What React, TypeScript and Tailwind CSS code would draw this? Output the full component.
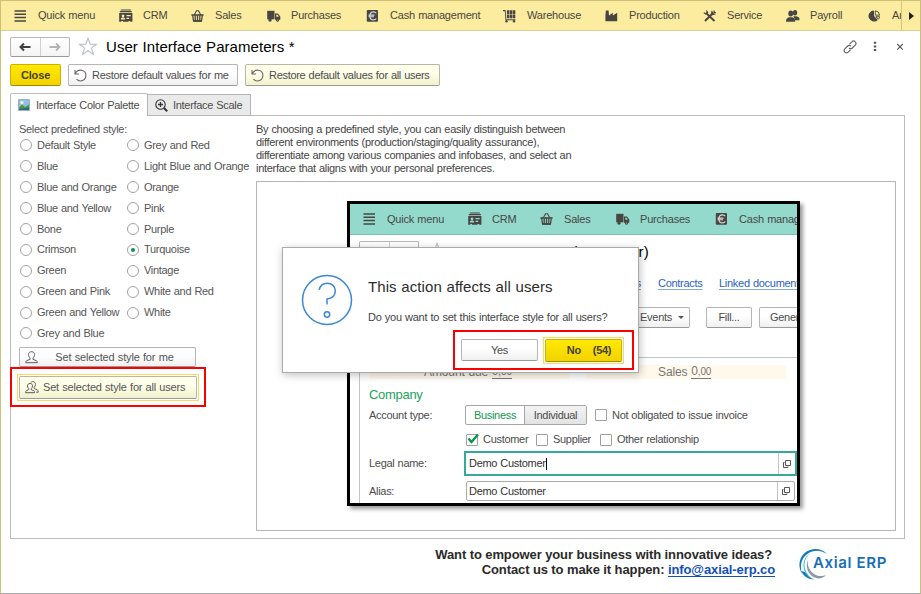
import React from "react";

type IconProps = { className?: string };

const MenuIcon = () => (
  <svg width="14" height="14" viewBox="0 0 14 14" fill="none" stroke="currentColor" strokeWidth="1.5">
    <path d="M.5 2h11.500M.5 5.300h11.500M.5 8.600h11.500M.5 11.900h11.500" />
  </svg>
);
const CrmIcon = () => (
  <svg width="14" height="14" viewBox="0 0 14 14" fill="currentColor">
    <path d="M1.800.4h10v1.200h-10zM.8 2.100h12v1.200H.8z" />
    <path fillRule="evenodd" d="M.2 3.900h13.200v8.900H11.300v-.8H9.600v.8H4v-.8H2.300v.8H.2zM4 5.400a1.400 1.400 0 1 0 .01 0zM1.800 10.600h4.400c0-1.400-.8-2-2.200-2s-2.200.6-2.200 2zM7.500 6.100v1.200h4.200v-1.200zM7.500 8.700v1.200h2.700v-1.200z" />
  </svg>
);
const BasketIcon = () => (
  <svg width="14" height="14" viewBox="0 0 14 14" fill="none" stroke="currentColor">
    <path d="M3.200 6 5.500 1.800h2L9.800 6" strokeWidth="1.100" />
    <path d="M.4 6h12.200" strokeWidth="1.600" />
    <path d="M1.700 6.500 2.600 12h7.800l.9-5.500M4.200 6.500v5M6.500 6.500v5M8.800 6.500v5" strokeWidth="1.300" />
    <path d="M2.300 12h8.400" strokeWidth="1.500" />
  </svg>
);
const TruckIcon = () => (
  <svg width="14" height="14" viewBox="0 0 14 14" fill="currentColor">
    <path d="M.2 1.800h7.300v8.500H.2z" />
    <path fillRule="evenodd" d="M8 4.500h2.900L13.300 7.500v3.300H8zM9.300 5.800v1.900h2.500L10.600 5.800z" />
    <circle cx="3" cy="11" r="1.700" />
    <circle cx="10.500" cy="11" r="1.700" />
    <circle cx="10.500" cy="11" r=".6" fill="#fff" opacity=".7" />
  </svg>
);
const EuroIcon = () => (
  <svg width="14" height="14" viewBox="0 0 14 14" fill="none">
    <rect x=".8" y="1" width="11.200" height="11.800" rx="1" fill="currentColor" />
    <path d="M10.300 4.300C9.600 3.300 8.700 2.900 7.500 2.900c-2.300 0-3.600 1.700-3.600 4s1.300 4 3.600 4c1.200 0 2.100-.4 2.800-1.400M2.500 6.100h6M2.500 7.800h5.500" stroke="#fff" strokeOpacity=".8" strokeWidth="1.100" />
  </svg>
);
const CartIcon = () => (
  <svg width="14" height="14" viewBox="0 0 14 14" fill="currentColor">
    <path d="M0 1h2.600l.7 9.200h9.200v1.100H2.500L1.800 2.200H0z" />
    <path d="M3.900 1.300h2.500v3.600H3.900zM6.900 1.300h2.300v3.600H6.900zM9.700 1.300h2.600v3.600H9.700zM3.900 5.400h2.500v3.900H3.900zM6.900 5.400h2.300v3.900H6.900zM9.700 5.400h2.600v3.900H9.700z" />
    <circle cx="3.500" cy="12.200" r="1.200" />
    <circle cx="11" cy="12.200" r="1.200" />
  </svg>
);
const FactoryIcon = () => (
  <svg width="14" height="14" viewBox="0 0 14 14" fill="currentColor">
    <path d="M.4 12.300V6.500L.9 1.500h2.700l.4 5L7.800 3.800v2.700L12.200 3.800v8.500z" />
  </svg>
);
const ToolsIcon = () => (
  <svg width="14" height="14" viewBox="0 0 14 14" fill="none" stroke="currentColor">
    <path d="M2.800 3.800 11.500 12" strokeWidth="1.900" />
    <path d="M10.500 3.500 2 12" strokeWidth="1.900" />
    <path d="M.8 3.600 2.600 5l2-1.600L3.400 1.500M9 1.800 8.600 4.500l1 1 2.800-.5M12.800 3.600 11.300 3.400 11 1.500" strokeWidth="1.200" />
  </svg>
);
const PeopleIcon = () => (
  <svg width="14" height="14" viewBox="0 0 14 14" fill="currentColor">
    <ellipse cx="9" cy="3.700" rx="2.200" ry="2.700" />
    <path d="M7.300 7.300h3.200l2.900 1.500V11.300H9.400z" />
    <ellipse cx="4.700" cy="4.500" rx="2.400" ry="3" />
    <path d="M0 12.800c0-3.200 1.200-3.900 3.200-4.500h2.800c2.200.6 3.200 1.300 3.200 4.500z" />
  </svg>
);
const PieIcon = () => (
  <svg width="14" height="14" viewBox="0 0 14 14">
    <path d="M6 1.500v5.500l3.900 3.900A5.500 5.500 0 1 1 6 1.500z" fill="currentColor" />
    <path d="M7.300 1.800a4.600 4.600 0 0 1 4.300 4.400H7.300zM7.800 7.700h3.800c-.1 1-.5 1.700-1.200 2.400z" fill="none" stroke="currentColor" strokeWidth=".9" />
  </svg>
);

const menuItems = [
  { label: "Quick menu", Icon: MenuIcon, width: "w-[105px]" },
  { label: "CRM", Icon: CrmIcon, width: "w-[72px]" },
  { label: "Sales", Icon: BasketIcon, width: "w-[76px]" },
  { label: "Purchases", Icon: TruckIcon, width: "w-[99px]" },
  { label: "Cash management", Icon: EuroIcon, width: "w-[137px]" },
  { label: "Warehouse", Icon: CartIcon, width: "w-[102px]" },
  { label: "Production", Icon: FactoryIcon, width: "w-[98px]" },
  { label: "Service", Icon: ToolsIcon, width: "w-[83px]" },
  { label: "Payroll", Icon: PeopleIcon, width: "w-[82px]" },
  { label: "Analytics", Icon: PieIcon, width: "w-[90px]" },
];

function MenuItems({ count }: { count: number }) {
  return (
    <div className="flex min-w-0 flex-1 items-center overflow-hidden pl-[13px] tracking-[-0.2px] text-[#484642]">
      {menuItems.slice(0, count).map(({ label, Icon, width }) => (
        <div key={label} className={`flex shrink-0 items-center whitespace-nowrap ${width}`}>
          <span className="w-6 shrink-0">
            <Icon />
          </span>
          {label}
        </div>
      ))}
    </div>
  );
}

function NavButtons() {
  return (
    <div className="flex h-5 w-[60px] shrink-0 rounded-[2px] border border-[#b5b5b5] border-b-[#999] bg-gradient-to-b from-white to-[#f4f4f4]">
      <div className="flex flex-1 items-center justify-center border-r border-[#d0d0d0]">
        <svg width="12" height="10" viewBox="0 0 12 10" fill="none" stroke="#404040" strokeWidth="2">
          <path d="M11.500 5H2M5 1.500 1.500 5 5 8.500" />
        </svg>
      </div>
      <div className="flex flex-1 items-center justify-center">
        <svg width="12" height="10" viewBox="0 0 12 10" fill="none" stroke="#b4b4b4" strokeWidth="1.800">
          <path d="M.5 5H10M7 1.500 10.500 5 7 8.500" />
        </svg>
      </div>
    </div>
  );
}

const Star = ({ className }: IconProps) => (
  <svg className={className} width="20" height="19" viewBox="0 0 20 19" fill="none" stroke="#b9c0c6" strokeWidth="1.100">
    <path d="m10 1.200 2.200 6h6.300l-5 3.900 1.900 6.300L10 13.700l-5.400 3.700 1.900-6.300-5-3.900h6.300z" />
  </svg>
);

const Undo = () => (
  <svg width="13" height="13" viewBox="0 0 13 13" fill="none" stroke="#666" strokeWidth="1.100">
    <path d="M1 1v4h4M1.200 4.800C2.500 2 5 .8 7.600 1.300c2.600.5 4.300 2.800 4.300 5.200 0 3-2.300 5.500-5.300 5.500-1.700 0-3-.6-4.100-1.800" />
  </svg>
);

const Person = () => (
  <svg width="14" height="13" viewBox="0 0 14 13" fill="none" stroke="#5c5c5c" strokeWidth="1">
    <path d="M6.500.7c2 0 3 1.200 3 2.900 0 1.500-.6 2.600-1.500 3.300v1.500l3.500 1.300c.6.300.8 1 .8 2H.8c0-1 .2-1.700.8-2L5 8.400V6.900C4.100 6.200 3.500 5.100 3.500 3.600c0-1.700 1-2.900 3-2.900z" />
  </svg>
);
const Persons = () => (
  <svg width="14" height="13" viewBox="0 0 14 13" fill="none" stroke="#5c5c5c" strokeWidth="1">
    <path d="M5 2.500c1.700 0 2.500 1 2.500 2.400 0 1.200-.5 2-1.200 2.600v1.200l2.500 1c.6.300.8.900.8 2H.6c0-1.100.2-1.700.8-2l2.300-1V7.500C3 6.900 2.500 6.100 2.500 4.900c0-1.400.8-2.400 2.500-2.400zM5.700 1.700C6.200 1 6.900.6 7.800.6c1.800 0 2.600 1.200 2.600 2.800 0 1.300-.5 2.200-1.200 2.900v1.300l3 1.300c.8.400 1 1 1 2.300h-2" />
  </svg>
);

function Radio({ label, on }: { label: string; on?: boolean }) {
  return (
    <div className="flex h-[20.9px] items-center whitespace-nowrap">
      <span className="mr-[5px] flex size-3 shrink-0 items-center justify-center rounded-full border border-[#a3a3a3] bg-white">
        {on && <span className="size-1 rounded-full bg-[#0a9447]" />}
      </span>
      {label}
    </div>
  );
}

function Check({ label, on }: { label: string; on?: boolean }) {
  return (
    <div className="flex items-center whitespace-nowrap">
      <span className="relative mr-[5px] size-3 shrink-0 rounded-[1px] border border-[#a0a0a0] bg-white">
        {on && (
          <svg className="absolute -top-[2px] left-0" width="12" height="12" viewBox="0 0 12 12" fill="none" stroke="#009646" strokeWidth="2.200">
            <path d="m1.500 5.500 3 3.500L11 1.500" />
          </svg>
        )}
      </span>
      {label}
    </div>
  );
}

const OpenIcon = () => (
  <svg width="8" height="8" viewBox="0 0 8 8" fill="none" stroke="#555" strokeWidth="1">
    <path d="M2.500.5h5v5h-5zM1.500 2.500h-1v5h4.500V6.500" />
  </svg>
);

const whiteButton =
  "flex items-center rounded-[2px] border border-[#b5b5b5] border-b-[#999] bg-gradient-to-b from-white from-40% to-[#f0f0f0]";
const creamButton =
  "flex items-center rounded-[2px] border border-[#b7b7a5] border-b-[#9c9c8c] bg-gradient-to-b from-[#ffffea] from-40% to-[#f1f1cd]";
const goldButton =
  "flex items-center justify-center rounded-[2px] border border-[#cdb000] border-b-[#a08a00] bg-gradient-to-b from-[#ffe900] to-[#f2d300] font-bold text-[#45412c]";

const leftStyles = ["Default Style", "Blue", "Blue and Orange", "Blue and Yellow", "Bone", "Crimson", "Green", "Green and Pink", "Green and Yellow", "Grey and Blue"];
const rightStyles = ["Grey and Red", "Light Blue and Orange", "Orange", "Pink", "Purple", "Turquoise", "Vintage", "White and Red", "White"];

function StylePicker() {
  return (
    <div className="w-[245px] shrink-0 pl-2 pt-[7px] text-[#555]">
      <div className="h-[12px] leading-[13px]">Select predefined style:</div>
      <div className="flex h-[210px] pl-px">
        <div className="w-[107px]">
          {leftStyles.map((s) => (
            <Radio key={s} label={s} />
          ))}
        </div>
        <div>
          {rightStyles.map((s) => (
            <Radio key={s} label={s} on={s === "Turquoise"} />
          ))}
        </div>
      </div>
      <div className={`mt-[2px] h-[20px] w-[177px] pl-[5px] ${whiteButton}`}>
        <Person />
        <span className="flex-1 pr-[5px] text-center tracking-[-0.15px]">Set selected style for me</span>
      </div>
      <div className="-ml-[9px] flex h-10 w-[196px] items-center border-2 border-[#fa0000] pl-[5px]">
        <div className="h-[27px] w-[182px] border border-[#f8d860] p-[1px]">
          <div className={`h-[23px] w-full pl-[5px] ${creamButton}`}>
            <Persons />
            <span className="pl-[4px] tracking-[-0.18px] whitespace-nowrap">Set selected style for all users</span>
          </div>
        </div>
      </div>
    </div>
  );
}

function Field({ value, focused }: { value: string; focused?: boolean }) {
  return (
    <div
      className={
        focused
          ? "flex h-[25px] w-[333px] items-stretch border-2 border-[#36aa98] bg-white text-[#333]"
          : "ml-[2px] flex h-[20px] w-[329px] items-stretch rounded-[2px] border border-[#a9a9a9] bg-white text-[#333]"
      }
    >
      <div className={focused ? "flex flex-1 items-center pl-[3px]" : "flex flex-1 items-center pl-[2px]"}>
        {value}
        {focused && <span className="h-3 w-px bg-black" />}
      </div>
      <div className="flex w-[17px] items-center justify-center border-l border-[#c4c4c4]">
        <OpenIcon />
      </div>
    </div>
  );
}

function Preview() {
  return (
    <div className="ml-[90px] mt-[19px] flex h-[305px] w-[453px] flex-col overflow-hidden border-[3px] border-black bg-white text-[#4c4c4c] shadow-[3px_3px_4px_rgba(0,0,0,0.4)]">
      <div className="flex h-[31px] shrink-0 border-b border-[#7fbfb3] bg-[#93dacd]">
        <MenuItems count={5} />
      </div>
      <div className="flex h-[32px] shrink-0 items-center pl-[9px]">
        <NavButtons />
        <Star className="ml-2 shrink-0" />
        <span className="ml-[9px] whitespace-nowrap text-[15px] tracking-[0.15px] text-black">Demo Customer (Customer)</span>
      </div>
      <div className="flex h-[32px] shrink-0 items-center whitespace-nowrap tracking-[-0.28px] text-[#2a62c0] underline decoration-[#86a9dc] underline-offset-2">
        <span className="w-[291px] shrink-0 text-right">Documents</span>
        <span className="ml-[17px] w-[61px] shrink-0">Contracts</span>
        <span>Linked documents</span>
      </div>
      <div className="flex h-[37px] shrink-0 items-center pl-[284px]">
        <div className={`h-[21px] w-[56px] shrink-0 justify-center ${whiteButton}`}>
          Events
          <span className="ml-[6px] border-x-[3px] border-t-[3px] border-x-transparent border-t-[#555]" />
        </div>
        <div className={`ml-4 h-[21px] w-[46px] shrink-0 justify-center ${whiteButton}`}>Fill...</div>
        <div className={`ml-[7px] h-[21px] w-[70px] shrink-0 pl-[10px] ${whiteButton}`}>Generate</div>
      </div>
      <div className="ml-[9px] mt-[21px] flex-1 border-l border-t border-[#c4c4c4] pl-[9px] pt-[7px]">
        <div className="flex h-[14px] gap-[17px] text-[12px] tracking-[-0.1px] text-[#777]">
          <div className="flex w-[200px] items-center bg-[#fff9ec] pl-[55px]">
            Amount due&nbsp;<span className="border-b border-[#777] leading-[12px]">0<span className="text-[10px]">,00</span></span>
          </div>
          <div className="flex w-[200px] items-center bg-[#fff9ec] pl-[72px]">
            Sales&nbsp;<span className="border-b border-[#777] leading-[12px]">0<span className="text-[10px]">,00</span></span>
          </div>
        </div>
        <div className="flex h-[25px] items-center pt-[5px] text-[13px] tracking-[-0.3px] text-[#22a35a]">Company</div>
        <div className="flex h-[22px] items-center">
          <div className="w-[96px]">Account type:</div>
          <div className="flex h-[20px] w-[122px] rounded-[2px] border border-[#a5a5a5] text-center leading-[18px]">
            <div className="w-[58px] text-[#12984c]">Business</div>
            <div className="flex-1 border-l border-[#a5a5a5] bg-gradient-to-b from-[#f3f3f3] to-[#e3e3e3]">Individual</div>
          </div>
          <div className="ml-[8px]">
            <Check label="Not obligated to issue invoice" />
          </div>
        </div>
        <div className="mt-[2px] flex h-[23px] items-center pl-[97px]">
          <div className="w-[70px]">
            <Check label="Customer" on />
          </div>
          <div className="w-[64px]">
            <Check label="Supplier" />
          </div>
          <Check label="Other relationship" />
        </div>
        <div className="flex h-[25px] items-center">
          <div className="w-[95px] shrink-0">Legal name:</div>
          <Field value="Demo Customer" focused />
        </div>
        <div className="mt-[5px] flex h-[20px] items-center">
          <div className="w-[95px] shrink-0">Alias:</div>
          <Field value="Demo Customer" />
        </div>
      </div>
    </div>
  );
}

function ConfirmDialog() {
  return (
    <div className="absolute left-[25px] top-[65px] flex h-[126px] w-[357px] border border-[#aaa] bg-white shadow-[1px_2px_8px_rgba(0,0,0,0.25)]">
      <svg className="ml-[18px] mt-[26px] shrink-0" width="52" height="52" viewBox="0 0 52 52" fill="none" stroke="#3d87d4" strokeWidth="1.500">
        <circle cx="26" cy="26" r="24.500" />
        <path d="M18.200 15.800c.9-4 4-6.600 8.100-6.600 4.600 0 8 3.300 8 7.600 0 5.300-4 7.700-8.300 8.200v5.500" />
        <circle cx="26" cy="40.500" r="2.700" />
      </svg>
      <div className="flex flex-1 flex-col pl-[15px] pt-[30px]">
        <div className="h-[18px] text-[15px] leading-[18px] tracking-[0.08px] text-[#2c2c2c]">This action affects all users</div>
        <div className="mt-[14px] h-[14px] whitespace-nowrap leading-[14px] tracking-[-0.24px] text-[#444]">Do you want to set this interface style for all users?</div>
        <div className="ml-[85px] mt-[6px] flex h-10 w-[181px] items-center border-2 border-[#fa0000] pl-[6px]">
          <div className={`h-[22px] w-[77px] justify-center ${whiteButton}`}>Yes</div>
          <div className="ml-[5px] h-[27px] w-[81px] border border-[#f8d860] p-[1px]">
            <div className={`h-[23px] gap-3 pl-[11px] ${goldButton}`}>
              <span>No</span>
              <span>(54)</span>
            </div>
          </div>
        </div>
      </div>
    </div>
  );
}

function Logo() {
  return (
    <div className="relative ml-[23px] h-[34px] w-[92px]">
      <svg width="40" height="34" viewBox="0 0 40 34">
        <path d="M29.500 7.500C24 1 14 .2 7.200 5.600.8 10.800-.3 20 4 26.500 1.500 18.500 3.500 10.500 10 6.400 16 2.500 23.500 3 29.500 7.500z" fill="#1478bd" />
        <path d="M12.500 5.900C5.500 10 3.500 18.500 7.500 25.500c1.500 2.700 3.800 5 6.200 6.200C8.500 27 6 22 6.500 16.500c.4-4.200 2.500-8 6-10.600z" fill="#29bfd0" />
        <path d="M9.800 12.500c-2.600 7-.3 14.500 6.200 17.800 4.200 2 9 1.200 12-2.300-3.500 1.600-8 1.500-11.600-.8-4.800-3.100-7.400-8.700-6.600-14.700z" fill="#8c98a3" />
        <path d="M3 24c2.500 5 7.500 8.500 13.500 8.500-4.500-1.500-7.500-4-9.500-7.500z" fill="#1478bd" />
      </svg>
      <span className="absolute left-[15px] top-[6px] whitespace-nowrap font-['Inter',sans-serif] text-[15px] font-semibold leading-[20px] tracking-[0.65px] text-[#156fb7]">Axial ERP</span>
    </div>
  );
}

export default function App() {
  return (
    <div className="flex h-[594px] w-[921px] flex-col overflow-hidden border border-[#cdbf78] border-b-[#aaa] bg-white font-['Liberation_Sans',Arial,sans-serif] text-[11px] leading-[13px] tracking-[-0.3px] text-[#4c4c4c] [word-spacing:0.4px]">
      <div className="flex h-[30px] shrink-0 border-b border-[#ddd09a] bg-[#fbeca0]">
        <MenuItems count={10} />
        <div className="flex w-[19px] items-center border-l border-[#d6c678] pl-[7px]">
          <span className="border-y-[4px] border-l-[5px] border-y-transparent border-l-[#222]" />
        </div>
      </div>

      <div className="flex h-[31px] shrink-0 items-center pl-[9px]">
        <NavButtons />
        <Star className="ml-2" />
        <span className="ml-[8px] text-[15px] tracking-[0.06px] text-black">User Interface Parameters *</span>
        <div className="ml-auto flex items-center pr-[16px]">
          <svg width="14" height="14" viewBox="0 0 14 14" fill="none" stroke="#666" strokeWidth="1.200">
            <path d="M6.500 4.200 8.900 1.800a2.300 2.300 0 0 1 3.300 3.300L9.300 8a2.300 2.300 0 0 1-3.300 0M7.500 9.800l-2.400 2.400a2.300 2.300 0 0 1-3.300-3.300L4.700 6A2.300 2.300 0 0 1 8 6" />
          </svg>
          <svg className="ml-[16px]" width="4" height="11" viewBox="0 0 4 11" fill="#555">
            <path d="M.8.8h2.400v2H.8zM.8 4.400h2.400v2H.8zM.8 8h2.400v2H.8z" />
          </svg>
          <svg className="ml-[19px]" width="8" height="8" viewBox="0 0 8 8" fill="none" stroke="#555" strokeWidth="1.100">
            <path d="m1.200 1 5.600 5.600M6.800 1 1.200 6.600" />
          </svg>
        </div>
      </div>

      <div className="mt-[2px] flex h-[22px] shrink-0 gap-[7px] pl-[9px]">
        <div className={`w-[51px] tracking-[-0.15px] ${goldButton}`}>Close</div>
        <div className={`w-[170px] pl-[5px] ${whiteButton}`}>
          <Undo />
          <span className="pl-[5px] whitespace-nowrap">Restore default values for me</span>
        </div>
        <div className={`w-[195px] pl-[5px] ${creamButton}`}>
          <Undo />
          <span className="pl-[5px] whitespace-nowrap">Restore default values for all users</span>
        </div>
      </div>

      <div className="z-10 -mb-px mt-[7px] flex h-[23px] shrink-0 items-end pl-[9px]">
        <div className="flex h-[23px] w-[138px] items-center rounded-t-[2px] border border-b-0 border-[#bcbcbc] bg-white pl-[7px]">
          <svg width="12" height="12" viewBox="0 0 12 12">
            <path d="M.5.5h11v11H.5z" fill="#8dbfea" stroke="#8fa5b5" strokeWidth=".8" />
            <path d="M1 8.500 4 5.500l3 2.500 4-2.500V11H1z" fill="#4e9b38" />
            <path d="M1 10 11 8.500V11H1z" fill="#2b6690" />
            <circle cx="4" cy="3.600" r="1.600" fill="#fff3c5" />
          </svg>
          <span className="pl-[6px] whitespace-nowrap">Interface Color Palette</span>
        </div>
        <div className="-ml-px flex h-[22px] w-[104px] items-center border border-[#b5b5b5] bg-[#eaeaea] pl-[7px]">
          <svg width="13" height="13" viewBox="0 0 13 13" fill="none" stroke="#333">
            <circle cx="5.500" cy="5.500" r="4.700" strokeWidth="1.100" />
            <path d="M5.500 3v5M3 5.500h5" strokeWidth="1.300" />
            <path d="m9 9 3.200 3.200" strokeWidth="2" />
          </svg>
          <span className="pl-[5px] whitespace-nowrap">Interface Scale</span>
        </div>
      </div>

      <div className="ml-[9px] flex h-[424px] w-[895px] shrink-0 border border-[#bcbcbc]">
        <StylePicker />
        <div className="flex flex-col pt-[7px]">
          <p className="h-[58px] whitespace-nowrap text-[#444]">
            By choosing a predefined style, you can easily distinguish between
            <br />
            different environments (production/staging/quality assurance),
            <br />
            differentiate among various companies and infobases, and select an
            <br />
            interface that aligns with your personal preferences.
          </p>
          <div className="relative h-[350px] w-[640px] border border-[#b5b5b5]">
            <Preview />
            <ConfirmDialog />
          </div>
        </div>
      </div>

      <div className="flex pt-[8px] [word-spacing:0px]">
        <div className="w-[774px] text-right text-[13px] font-bold leading-[15px] tracking-[-0.1px] text-[#2a2a2a]">
          <div className="pr-[3px]">Want to empower your business with innovative ideas?</div>
          <div>
            Contact us to make it happen: <span className="text-[#1450b4] underline underline-offset-2">info@axial-erp.co</span>
          </div>
        </div>
        <Logo />
      </div>
    </div>
  );
}
